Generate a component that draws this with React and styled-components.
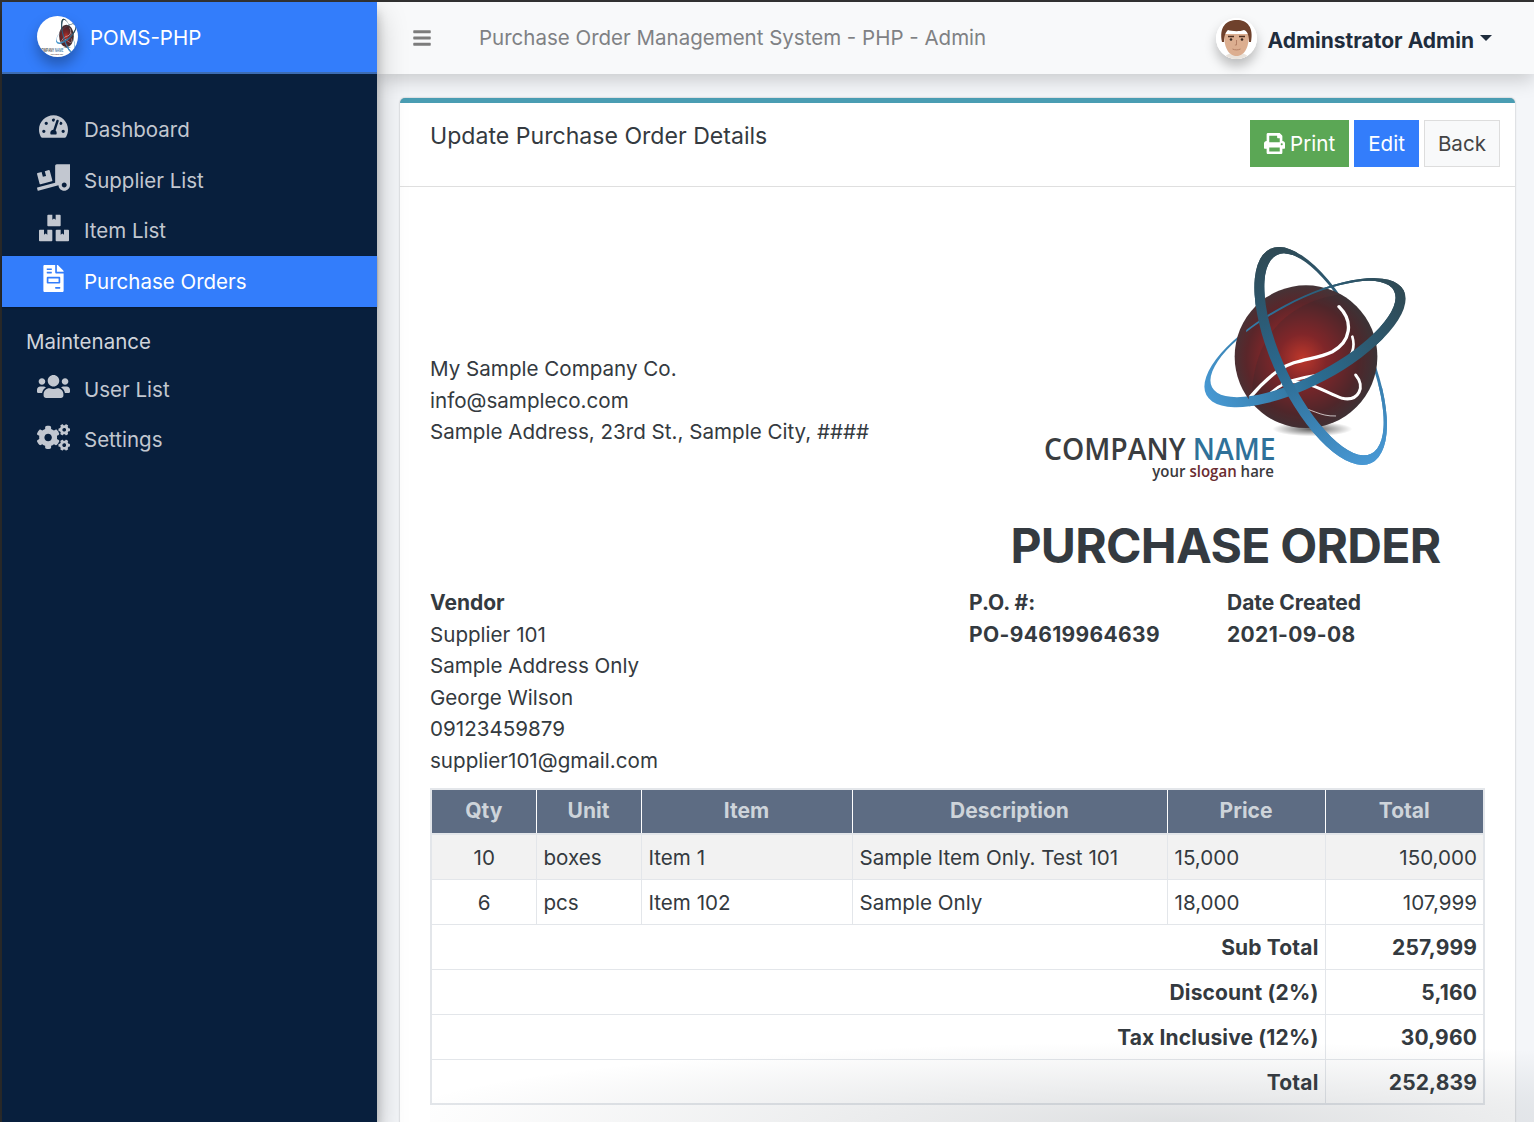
import React from 'react';
import styled, { createGlobalStyle } from 'styled-components';
import {
  FaTachometerAlt,
  FaTruckLoading,
  FaBoxes,
  FaFileInvoice,
  FaUsers,
  FaCogs,
  FaPrint,
  FaBars,
} from 'react-icons/fa';

const GlobalStyle = createGlobalStyle`
  html, body {
    margin: 0;
    height: 1122px;
    overflow: hidden;
    background: #333;
    font-family: Inter, "Noto Sans", sans-serif;
  }
  * { box-sizing: border-box; }
`;

// Layout
const Page = styled.div`
  position: relative;
  display: flex;
  height: 1122px;
  padding: 2px 0 0 2px;
  overflow: hidden;
`;

const Sidebar = styled.aside`
  width: 375px;
  flex: none;
  background: #081f3d;
  box-shadow: 0 14px 28px rgba(0, 0, 0, 0.25), 0 10px 10px rgba(0, 0, 0, 0.22);
  position: relative;
  z-index: 3;
`;

const Brand = styled.div`
  height: 72px;
  background: #337dfb;
  border-bottom: 2px solid #3c6cb4;
  display: flex;
  align-items: center;
  padding-left: 35px;
  gap: 12px;
  color: #fff;
  font-size: 20.5px;
`;

const BrandBadge = styled.div`
  width: 41px;
  height: 41px;
  border-radius: 50%;
  background: #fff;
  overflow: hidden;
  display: flex;
  align-items: center;
  justify-content: center;
  box-shadow: 0 8px 14px rgba(0, 0, 0, 0.3);
  margin-top: -2px;
`;

const Nav = styled.nav`
  padding-top: 30px;
  display: flex;
  flex-direction: column;
`;

const NavItem = styled.div`
  height: 50.7px;
  display: flex;
  align-items: center;
  padding-left: 35px;
  gap: 14px;
  font-size: 20.5px;
  color: ${props => (props.active ? '#fff' : '#c2c7d0')};
  background: ${props => (props.active ? '#337dfb' : 'transparent')};
  box-shadow: ${props => (props.active ? '0 1px 2px rgba(0,0,0,.3)' : 'none')};
`;

const NavIcon = styled.span`
  width: 33px;
  flex: none;
  display: flex;
  justify-content: center;
  margin-bottom: 5px;
  font-size: ${props => props.size || 29}px;
`;

const NavHeading = styled.div`
  color: #d0d4db;
  font-size: 20.5px;
  padding: 20px 0 8px 24px;
  line-height: 29px;
`;

const Main = styled.main`
  flex: 1;
  min-width: 0;
  background: #f4f6f9;
  display: flex;
  flex-direction: column;
`;

const Topbar = styled.header`
  height: 72px;
  flex: none;
  background: #f8f9fa;
  box-shadow: 0 6px 18px rgba(0, 0, 0, 0.18);
  display: flex;
  align-items: center;
  padding: 0 42px 0 35px;
  position: relative;
  z-index: 2;
`;

const MenuButton = styled.span`
  color: #7c7c7c;
  font-size: 20px;
  display: flex;
  margin-right: 47px;
  margin-top: -1px;
`;

const SystemTitle = styled.div`
  flex: 1;
  color: #7f8184;
  font-size: 20.5px;
  margin-top: -2px;
`;

const UserMenu = styled.div`
  display: flex;
  align-items: center;
  gap: 10px;
  color: #1f2d3d;
  font-size: 21px;
  font-weight: 700;
  line-height: 30px;
`;

const UserName = styled.span`
  padding-top: 6px;
`;

const Avatar = styled.div`
  width: 41px;
  height: 41px;
  border-radius: 50%;
  overflow: hidden;
  background: #fff;
  box-shadow: 0 7px 12px rgba(0, 0, 0, 0.25);
`;

const Caret = styled.span`
  width: 0;
  height: 0;
  border-left: 6px solid transparent;
  border-right: 6px solid transparent;
  border-top: 6px solid #1f2d3d;
  margin-left: -4px;
`;

const Content = styled.div`
  padding: 24px 19px 0 23px;
`;

// Card
const Card = styled.section`
  background: #fff;
  border-top: 5px solid #4a9db3;
  border-radius: 5px 5px 0 0;
  box-shadow: 0 0 2px rgba(0, 0, 0, 0.3);
  color: #343a40;
  font-size: 20.6px;
  line-height: 31.5px;
`;

const CardHeader = styled.div`
  display: flex;
  justify-content: space-between;
  align-items: flex-start;
  height: 84px;
  padding: 17px 15px 0 30px;
  border-bottom: 1px solid #dfdfdf;
`;

const CardTitle = styled.h3`
  margin: 2px 0 0;
  font-size: 23.1px;
  font-weight: 400;
  line-height: 28px;
`;

const ButtonRow = styled.div`
  display: flex;
  gap: 5px;
`;

const Button = styled.button`
  height: 47px;
  padding: 0 13px;
  font: inherit;
  display: flex;
  align-items: center;
  gap: 5px;
  color: ${props => props.color || '#fff'};
  background: ${props => props.bg};
  border: 1px solid ${props => props.line || props.bg};
`;

const CardBody = styled.div`
  padding: 43px 30px 60px;
`;

const TopGrid = styled.div`
  display: grid;
  grid-template-columns: 538px 515px;
  align-items: center;
`;

const CompanyInfo = styled.div`
  grid-row: 1 / span 2;
  margin-bottom: 16px;
`;

const LogoBox = styled.div`
  display: flex;
  justify-content: center;
  padding-right: 14px;
`;

const DocTitle = styled.h1`
  grid-column: 2;
  margin: 26.5px 0 12.5px;
  font-size: 48px;
  line-height: 58px;
  font-weight: 700;
  text-align: center;
  letter-spacing: -0.7px;
`;

const InfoGrid = styled.div`
  display: grid;
  grid-template-columns: 539px 258px 256px;
  margin-bottom: 12px;
`;

const Label = styled.div`
  font-size: 21px;
  font-weight: 700;
`;

const Code = styled.div`
  font-size: 21px;
  font-weight: 700;
  letter-spacing: 0.35px;
`;

// Table
const OrderTable = styled.table`
  width: 1053px;
  border-collapse: collapse;
  table-layout: fixed;
  border: 2px solid #e3e6ea;
  line-height: 30px;
`;

const Th = styled.th`
  height: 45px;
  padding: 0 0 1px;
  background: #5d6c83;
  color: #ced4da;
  font-size: 21px;
  font-weight: 700;
  text-align: center;
  border-left: 1px solid #fff;
  border-bottom: 2px solid #e3e6ea;
  &:first-child { border-left: 0; }
`;

const Tr = styled.tr`
  background: ${props => (props.striped ? '#f2f2f2' : '#fff')};
`;

const Td = styled.td`
  height: 45px;
  padding: 3px 6px 0 7px;
  text-align: ${props => props.align || 'left'};
  font-size: ${props => (props.strong ? '21px' : 'inherit')};
  font-weight: ${props => (props.strong ? 700 : 400)};
  letter-spacing: ${props => (props.strong ? '0.15px' : '0')};
  border: 1px solid #e3e6ea;
`;

const BottomShade = styled.div`
  position: absolute;
  left: 430px;
  right: 0;
  bottom: 0;
  height: 80px;
  background: radial-gradient(ellipse 72% 100% at 68% 100%, rgba(60, 70, 80, 0.17), rgba(60, 70, 80, 0));
  pointer-events: none;
  z-index: 4;
`;

// crescent shaped orbit, inner ellipse is pushed off centre so the band thins out
const Ring = ({ id, kind }) => {
  const shape =
    kind === 'a'
      ? { cx: 905, cy: 378, a: 355, b: 142, rot: 64.7, dx: 10, dy: -5, da: 25, db: 20 }
      : { cx: 858, cy: 338, a: 335, b: 128, rot: -28, dx: -6, dy: -11, da: 26, db: 18 };
  const ellipse = (cx, cy, a, b) => {
    const t = (shape.rot * Math.PI) / 180;
    const ux = a * Math.cos(t);
    const uy = a * Math.sin(t);
    return `M${cx - ux} ${cy - uy}A${a} ${b} ${shape.rot} 1 1 ${cx + ux} ${cy + uy}A${a} ${b} ${shape.rot} 1 1 ${cx - ux} ${cy - uy}Z`;
  };
  return (
    <path
      fillRule="evenodd"
      fill={`url(#${id}${kind})`}
      d={
        ellipse(shape.cx, shape.cy, shape.a, shape.b) +
        ellipse(shape.cx + shape.dx, shape.cy + shape.dy, shape.a - shape.da, shape.b - shape.db)
      }
    />
  );
};

// Drawings
const CompanyMark = ({ width, height, id }) => (
  <svg width={width} height={height} viewBox="0 0 1200 780" preserveAspectRatio="none">
    <defs>
      <linearGradient id={`${id}a`} gradientUnits="userSpaceOnUse" x1="760" y1="60" x2="1050" y2="700">
        <stop offset="0" stopColor="#2f4a55" />
        <stop offset="0.45" stopColor="#2a678c" />
        <stop offset="1" stopColor="#4898d4" />
      </linearGradient>
      <linearGradient id={`${id}b`} gradientUnits="userSpaceOnUse" x1="560" y1="480" x2="1140" y2="170">
        <stop offset="0" stopColor="#4798d2" />
        <stop offset="0.5" stopColor="#2a6a8e" />
        <stop offset="1" stopColor="#2f4a55" />
      </linearGradient>
      <radialGradient id={`${id}s`} gradientUnits="userSpaceOnUse" cx="850" cy="385" r="240">
        <stop offset="0" stopColor="#e83c2a" />
        <stop offset="0.3" stopColor="#9a2628" />
        <stop offset="0.7" stopColor="#5a262a" />
        <stop offset="1" stopColor="#3b3a3d" />
      </radialGradient>
      <radialGradient id={`${id}g`}>
        <stop offset="0" stopColor="#000" stopOpacity="0.65" />
        <stop offset="1" stopColor="#000" stopOpacity="0" />
      </radialGradient>
      <clipPath id={`${id}c`}>
        <circle cx="861" cy="380" r="214" />
      </clipPath>
      <clipPath id={`${id}fa`}>
        <polygon points="560,0 800,0 1000,400 1200,560 1200,780 560,780" />
      </clipPath>
      <clipPath id={`${id}fb`}>
        <polygon points="500,300 680,260 700,780 1200,780 1090,330 1200,100 1200,0" />
      </clipPath>
    </defs>
    <ellipse cx="880" cy="597" rx="120" ry="22" fill={`url(#${id}g)`} />
    <Ring id={id} kind="b" />
    <Ring id={id} kind="a" />
    <circle cx="861" cy="380" r="214" fill={`url(#${id}s)`} />
    <path
      d="M700 480 C710 300 830 200 1000 190 L1100 300 L1100 620 L760 620Z"
      fill="#2b2b2e"
      opacity="0.22"
      clipPath={`url(#${id}c)`}
    />
    <g fill="none" stroke="#fff" strokeLinecap="round">
      <path d="M960 230 C1005 275 995 335 940 365 C890 390 830 385 780 420 C745 445 720 470 695 500" strokeWidth="10" />
      <path d="M1000 320 C1015 370 980 410 920 430 C860 445 790 440 730 515" strokeWidth="8" />
      <path d="M790 460 C860 440 920 490 970 505 C1020 515 1040 470 1010 435" strokeWidth="9" />
      <path d="M830 530 C880 535 900 560 950 558" strokeWidth="3" opacity="0.7" />
    </g>
    <g clipPath={`url(#${id}fb)`}>
      <Ring id={id} kind="b" />
    </g>
    <g clipPath={`url(#${id}fa)`}>
      <Ring id={id} kind="a" />
    </g>
    <text x="75" y="690" fontFamily="'Open Sans', sans-serif" fontSize="90" fontWeight="600" textLength="695" lengthAdjust="spacingAndGlyphs">
      <tspan fill="#3a3d40">COMPANY </tspan>
      <tspan fill="#2f7199">NAME</tspan>
    </text>
    <text x="400" y="740" fontFamily="'Open Sans', sans-serif" fontSize="47" fontWeight="600" textLength="365" lengthAdjust="spacingAndGlyphs">
      <tspan fill="#3a3a3d">your </tspan>
      <tspan fill="#6a2c30">slogan </tspan>
      <tspan fill="#3a3a3d">hare</tspan>
    </text>
  </svg>
);

const UserFace = () => (
  <svg width="41" height="41" viewBox="0 0 41 41">
    <rect width="41" height="41" fill="#fff" />
    <path d="M8 41 C9 36 14 35 20.5 35 C27 35 32 36 33 41Z" fill="#e9e3dc" />
    <path d="M8 16 C8 32 14 38 20.5 38 C27 38 33 32 33 16Z" fill="#dcae90" />
    <path d="M6 24 C3 9 10 2 21 2 C31 2 38 9 35 24 L33 24 C33 16 31 13 28 12 C23 14 15 13 12 12 C10 14 8 17 8 24Z" fill="#6f412c" />
    <path d="M12 18.5h6M23 18.5h6" stroke="#4e3022" strokeWidth="1.4" />
    <circle cx="15" cy="21.5" r="1.3" fill="#3a2a22" />
    <circle cx="26" cy="21.5" r="1.3" fill="#3a2a22" />
    <path d="M20.5 22v5h-1.6M16.5 31c2.5 1.2 5.5 1.2 8 0" fill="none" stroke="#b58066" strokeWidth="1" />
  </svg>
);

const menu = [
  { label: 'Dashboard', Icon: FaTachometerAlt, size: 29 },
  { label: 'Supplier List', Icon: FaTruckLoading, size: 33 },
  { label: 'Item List', Icon: FaBoxes, size: 30 },
  { label: 'Purchase Orders', Icon: FaFileInvoice, size: 27, active: true },
];

const lines = [
  { qty: 10, unit: 'boxes', item: 'Item 1', desc: 'Sample Item Only. Test 101', price: '15,000', total: '150,000' },
  { qty: 6, unit: 'pcs', item: 'Item 102', desc: 'Sample Only', price: '18,000', total: '107,999' },
];

const summary = [
  ['Sub Total', '257,999'],
  ['Discount (2%)', '5,160'],
  ['Tax Inclusive (12%)', '30,960'],
  ['Total', '252,839'],
];

const App = () => (
  <Page>
    <GlobalStyle />
    <Sidebar>
      <Brand>
        <BrandBadge>
          <CompanyMark id="mini" width={41} height={41} />
        </BrandBadge>
        POMS-PHP
      </Brand>
      <Nav>
        {menu.map(({ label, Icon, size, active }) => (
          <NavItem key={label} active={active}>
            <NavIcon size={size}>
              <Icon />
            </NavIcon>
            {label}
          </NavItem>
        ))}
        <NavHeading>Maintenance</NavHeading>
        <NavItem>
          <NavIcon size={33}>
            <FaUsers />
          </NavIcon>
          User List
        </NavItem>
        <NavItem>
          <NavIcon size={33}>
            <FaCogs />
          </NavIcon>
          Settings
        </NavItem>
      </Nav>
    </Sidebar>
    <Main>
      <Topbar>
        <MenuButton>
          <FaBars />
        </MenuButton>
        <SystemTitle>Purchase Order Management System - PHP - Admin</SystemTitle>
        <UserMenu>
          <Avatar>
            <UserFace />
          </Avatar>
          <UserName>Adminstrator Admin</UserName>
          <Caret />
        </UserMenu>
      </Topbar>
      <Content>
        <Card>
          <CardHeader>
            <CardTitle>Update Purchase Order Details</CardTitle>
            <ButtonRow>
              <Button bg="#5ba755">
                <FaPrint size={21} />
                Print
              </Button>
              <Button bg="#337dfb">Edit</Button>
              <Button bg="#f8f9fa" line="#dddddd" color="#444">
                Back
              </Button>
            </ButtonRow>
          </CardHeader>
          <CardBody>
            <TopGrid>
              <CompanyInfo>
                <div>My Sample Company Co.</div>
                <div>info@sampleco.com</div>
                <div>Sample Address, 23rd St., Sample City, ####</div>
              </CompanyInfo>
              <LogoBox>
                <CompanyMark id="main" width={400} height={260} />
              </LogoBox>
              <DocTitle>PURCHASE ORDER</DocTitle>
            </TopGrid>
            <InfoGrid>
              <div>
                <Label>Vendor</Label>
                <div>Supplier 101</div>
                <div>Sample Address Only</div>
                <div>George Wilson</div>
                <div>09123459879</div>
                <div>supplier101@gmail.com</div>
              </div>
              <div>
                <Label>P.O. #:</Label>
                <Code>PO-94619964639</Code>
              </div>
              <div>
                <Label>Date Created</Label>
                <Code>2021-09-08</Code>
              </div>
            </InfoGrid>
            <OrderTable>
              <colgroup>
                <col style={{ width: 105 }} />
                <col style={{ width: 105 }} />
                <col style={{ width: 211 }} />
                <col style={{ width: 315 }} />
                <col style={{ width: 158 }} />
                <col style={{ width: 159 }} />
              </colgroup>
              <thead>
                <tr>
                  {['Qty', 'Unit', 'Item', 'Description', 'Price', 'Total'].map(h => (
                    <Th key={h}>{h}</Th>
                  ))}
                </tr>
              </thead>
              <tbody>
                {lines.map((row, i) => (
                  <Tr key={row.item} striped={i === 0}>
                    <Td align="center">{row.qty}</Td>
                    <Td>{row.unit}</Td>
                    <Td>{row.item}</Td>
                    <Td>{row.desc}</Td>
                    <Td>{row.price}</Td>
                    <Td align="right">{row.total}</Td>
                  </Tr>
                ))}
                {summary.map(([name, amount]) => (
                  <Tr key={name}>
                    <Td colSpan={5} align="right" strong>
                      {name}
                    </Td>
                    <Td align="right" strong>
                      {amount}
                    </Td>
                  </Tr>
                ))}
              </tbody>
            </OrderTable>
          </CardBody>
        </Card>
      </Content>
    </Main>
    <BottomShade />
  </Page>
);

export default App;
